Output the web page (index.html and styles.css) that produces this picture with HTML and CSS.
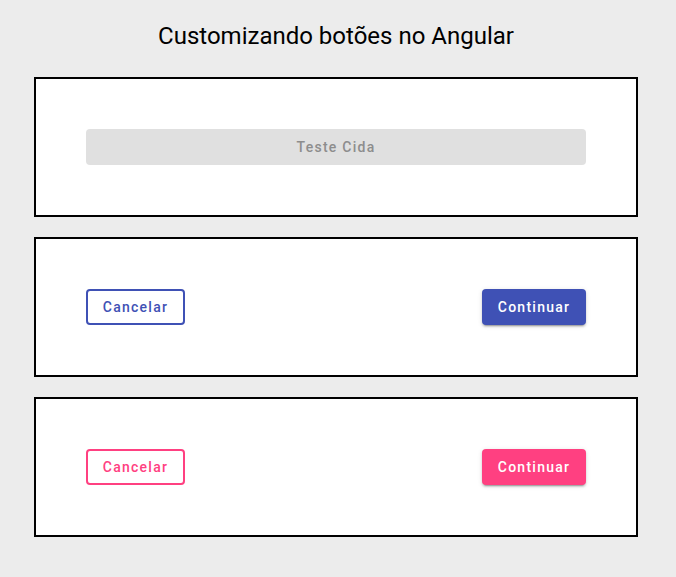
FILE: index.html
```html
<!DOCTYPE html>
<html lang="pt">
<head>
<meta charset="utf-8">
<link rel="stylesheet" href="styles.css">
</head>
<body>
<h1 class="title">Customizando botões no Angular</h1>
<main class="boxes">
  <section class="box">
    <button class="btn btn-disabled btn-full" disabled>Teste Cida</button>
  </section>
  <section class="box box-split">
    <button class="btn btn-stroked indigo">Cancelar</button>
    <button class="btn btn-raised bg-indigo">Continuar</button>
  </section>
  <section class="box box-split">
    <button class="btn btn-stroked pink">Cancelar</button>
    <button class="btn btn-raised bg-pink">Continuar</button>
  </section>
</main>
</body>
</html>
```

FILE: styles.css
```css
html, body {
  margin: 0;
  padding: 0;
  background: #ececec;
  font-family: Roboto, "Liberation Sans", sans-serif;
}
body {
  height: 577px;
  overflow: hidden;
}
.title {
  margin: 0;
  padding-top: 21px;
  height: 56px;
  box-sizing: border-box;
  text-align: center;
  font-size: 24px;
  font-weight: 400;
  line-height: 30px;
  color: #000;
  padding-right: 4px;
}
.boxes {
  display: flex;
  flex-direction: column;
  gap: 20px;
  padding-left: 34px;
  padding-top: 21px;
}
.box {
  width: 604px;
  height: 140px;
  box-sizing: border-box;
  border: 2px solid #000;
  background: #fff;
  padding: 50px 50px;
  display: flex;
  align-items: flex-start;
}
.box-split {
  justify-content: space-between;
}
.btn {
  height: 36px;
  box-sizing: border-box;
  font-family: Roboto, "Liberation Sans", sans-serif;
  font-size: 14px;
  font-weight: 500;
  letter-spacing: 1.25px;
  border-radius: 4px;
  padding: 0 15px;
  border: none;
  cursor: pointer;
  line-height: 36px;
}
.btn-full {
  width: 500px;
}
.btn-disabled {
  background: #e0e0e0;
  color: #8d8d8d;
}
.btn-stroked {
  background: #fff;
  border: 2px solid currentColor;
  line-height: 32px;
  width: 99px;
  padding: 0;
}
.btn-raised {
  color: #fff;
  width: 104px;
  padding: 0;
  box-shadow: 0 3px 1px -2px rgba(0,0,0,.2), 0 2px 2px 0 rgba(0,0,0,.14), 0 1px 5px 0 rgba(0,0,0,.12);
}
.indigo { color: #3f51b5; }
.pink { color: #ff4081; }
.bg-indigo { background: #3f51b5; }
.bg-pink { background: #ff4081; }
```
